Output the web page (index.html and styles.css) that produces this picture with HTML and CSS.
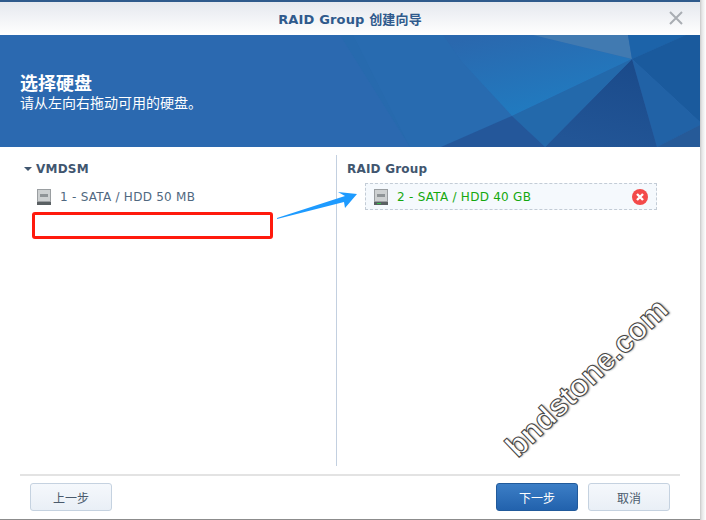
FILE: index.html
```html
<!DOCTYPE html>
<html>
  <head>
    <meta charset="UTF-8" />
    <title>RAID Group 创建向导</title>
    <link rel="stylesheet" href="styles.css">
  </head>
  <body>
    <div class="window">
      <div class="titlebar">
        <span class="title">RAID Group 创建向导</span>
        <svg class="close" width="14" height="14" viewBox="0 0 14 14">
          <path d="M1 1 L13 13 M13 1 L1 13" stroke="#a9adb3" stroke-width="2" fill="none" />
        </svg>
      </div>

      <div class="banner">
        <svg class="banner-art" width="700" height="112" viewBox="0 0 700 112">
          <defs>
            <linearGradient id="glow" x1="0.2" y1="0" x2="0.75" y2="1">
              <stop offset="0" stop-color="#2a68ae" />
              <stop offset="1" stop-color="#1f7ec3" />
            </linearGradient>
            <linearGradient id="dark" x1="0.8" y1="0" x2="0.5" y2="1">
              <stop offset="0" stop-color="#1a4a8a" />
              <stop offset="1" stop-color="#225596" />
            </linearGradient>
          </defs>
          <polygon points="340,0 443,0 462,27 512,81 441,112 410,112" fill="#276aae" />
          <polygon points="443,0 533,0 632,24 512,81 462,27" fill="url(#glow)" />
          <polygon points="462,27 512,81 441,112 410,112 353,0 443,0" fill="#2a6cb0" opacity="0.6" />
          <polygon points="533,0 628,0 632,24" fill="#417ab1" />
          <polygon points="628,0 686,0 632,24" fill="#1c63a9" />
          <polygon points="686,0 700,0 700,87 632,24" fill="#1a5a9d" />
          <polygon points="632,24 700,87 700,90 657,112" fill="#2162a6" />
          <polygon points="632,24 657,112 545,112" fill="url(#dark)" />
          <polygon points="632,24 545,112 512,81" fill="#2369ab" />
          <polygon points="512,81 545,112 441,112" fill="#24579a" />
          <polygon points="700,90 700,112 657,112" fill="#265a98" />
        </svg>
        <h1>选择硬盘</h1>
        <p>请从左向右拖动可用的硬盘。</p>
      </div>

      <div class="panes">
        <div class="pane pane-left">
          <div class="group-name"><span class="caret"></span>VMDSM</div>
          <div class="disk">
            <svg class="disk-icon" width="14" height="16" viewBox="0 0 14 16">
              <rect x="0" y="0" width="14" height="16" fill="#9a9ea1" />
              <rect x="1" y="1" width="12" height="11" fill="#cdd0d1" />
              <rect x="3" y="5" width="8" height="3" fill="#8f9497" />
              <rect x="0" y="13" width="14" height="3" fill="#5a6063" />
            </svg>
            <span>1 - SATA / HDD 50 MB</span>
          </div>
        </div>
        <div class="pane pane-right">
          <div class="group-name">RAID Group</div>
          <div class="disk disk-picked">
            <svg class="disk-icon" width="14" height="16" viewBox="0 0 14 16">
              <rect x="0" y="0" width="14" height="16" fill="#9a9ea1" />
              <rect x="1" y="1" width="12" height="11" fill="#cdd0d1" />
              <rect x="3" y="5" width="8" height="3" fill="#8f9497" />
              <rect x="0" y="13" width="14" height="3" fill="#5a6063" />
              <rect x="3" y="14" width="4" height="1" fill="#35c04a" />
            </svg>
            <span class="disk-label">2 - SATA / HDD 40 GB</span>
            <svg class="remove" width="16" height="16" viewBox="0 0 16 16">
              <circle cx="8" cy="8" r="8" fill="#f34a4a" />
              <path d="M5 5 L11 11 M11 5 L5 11" stroke="#fff" stroke-width="2.4" fill="none" />
            </svg>
          </div>
        </div>
      </div>

      <div class="footer">
        <button class="btn">上一步</button>
        <div class="footer-right">
          <button class="btn btn-primary">下一步</button>
          <button class="btn">取消</button>
        </div>
      </div>

      <!-- annotations drawn over the screenshot -->
      <div class="red-box"></div>
      <svg class="arrow" width="84" height="34" viewBox="0 0 84 34">
        <polygon points="1,30 69,8 62,4 81,6 69,20 68,14 1,31" fill="#1e9bff" />
      </svg>
      <div class="watermark">bndstone.com</div>
    </div>
  </body>
</html>
```

FILE: styles.css
```css
html,
body {
  margin: 0;
  height: 100%;
  overflow: hidden;
}

body {
  background: linear-gradient(to right, #fff 700px, #c9c9c9 700px, #e6e6e6 702px, #fff 706px);
  font-family: "DejaVu Sans", "Noto Sans CJK SC", sans-serif;
  font-size: 12px;
}

.window {
  position: relative;
  width: 700px;
  height: 520px;
  box-sizing: border-box;
  display: flex;
  flex-direction: column;
  background: #fff;
  border-top: 2px solid #2f5a8c;
  border-bottom: 1px solid #8c8c8c;
}

/* Title bar */
.titlebar {
  height: 33px;
  flex: none;
  display: flex;
  align-items: center;
  justify-content: center;
  position: relative;
  background: linear-gradient(#e5e8ee, #fff);
}

.title {
  font-size: 13px;
  font-weight: bold;
  letter-spacing: 0.15px;
  color: #2f5a8c;
}

.close {
  position: absolute;
  right: 17px;
  top: 9px;
}

/* Banner */
.banner {
  height: 112px;
  flex: none;
  box-sizing: border-box;
  padding: 37px 20px 0;
  position: relative;
  background: #2b69b0;
  color: #fff;
}

.banner-art {
  position: absolute;
  left: 0;
  top: 0;
}

.banner h1,
.banner p {
  position: relative;
  margin: 0;
}

.banner h1 {
  font-size: 18px;
  line-height: 23px;
  font-weight: bold;
}

.banner p {
  font-size: 14px;
  line-height: 17px;
}

/* Panes */
.panes {
  flex: 1;
  display: flex;
  padding: 8px 20px 8px;
}

.pane-left {
  width: 317px;
  box-sizing: border-box;
  border-right: 1px solid #c3d0e0;
  padding-left: 4px;
}

.pane-right {
  flex: 1;
  padding-left: 10px;
}

.group-name {
  height: 12px;
  line-height: 12px;
  margin-top: 8px;
  font-weight: bold;
  letter-spacing: 0.2px;
  color: #41566f;
  display: flex;
  align-items: center;
}

.caret {
  width: 0;
  height: 0;
  margin-right: 4px;
  border-left: 4px solid transparent;
  border-right: 4px solid transparent;
  border-top: 4px solid #41566f;
}

.disk {
  display: flex;
  align-items: center;
  height: 27px;
  margin-top: 8px;
  padding-left: 13px;
  letter-spacing: 0.26px;
  color: #506880;
}

.disk-icon {
  margin-right: 9px;
  flex: none;
}

.disk-picked {
  width: 292px;
  box-sizing: border-box;
  margin: 8px 0 0 18px;
  padding: 0 8px 0 8px;
  background: #f5f9fd;
  border: 1px dashed #c3ccd6;
  color: #14a80e;
}

.disk-label {
  flex: 1;
}

.remove {
  flex: none;
}

/* Footer */
.footer {
  flex: none;
  height: 45px;
  box-sizing: border-box;
  margin: 0 20px;
  padding: 7px 10px 0;
  border-top: 2px solid #e3e3e3;
  display: flex;
  justify-content: space-between;
  align-items: flex-start;
}

.footer-right {
  display: flex;
  gap: 10px;
}

.btn {
  width: 82px;
  height: 28px;
  padding: 0;
  border: 1px solid #c5d2e0;
  border-radius: 3px;
  background: linear-gradient(#f5f8fc, #e9eff6);
  font-family: inherit;
  font-size: 12px;
  color: #4a5a6c;
}

.btn-primary {
  border-color: #215a9b;
  background: linear-gradient(#3c7ec6, #2262ad);
  color: #fff;
}

/* Annotations */
.red-box {
  position: absolute;
  left: 32px;
  top: 210px;
  width: 241px;
  height: 27px;
  box-sizing: border-box;
  border: 3px solid #ff1a0d;
  border-radius: 3px;
}

.arrow {
  position: absolute;
  left: 276px;
  top: 186px;
}

.watermark {
  position: absolute;
  left: 481px;
  top: 356px;
  font-family: "Liberation Sans", sans-serif;
  font-size: 31px;
  font-weight: bold;
  line-height: 40px;
  white-space: nowrap;
  color: #fff;
  -webkit-text-stroke: 1px #444;
  text-shadow: 1px 1px 2px #888;
  transform: rotate(-44deg);
}
```
